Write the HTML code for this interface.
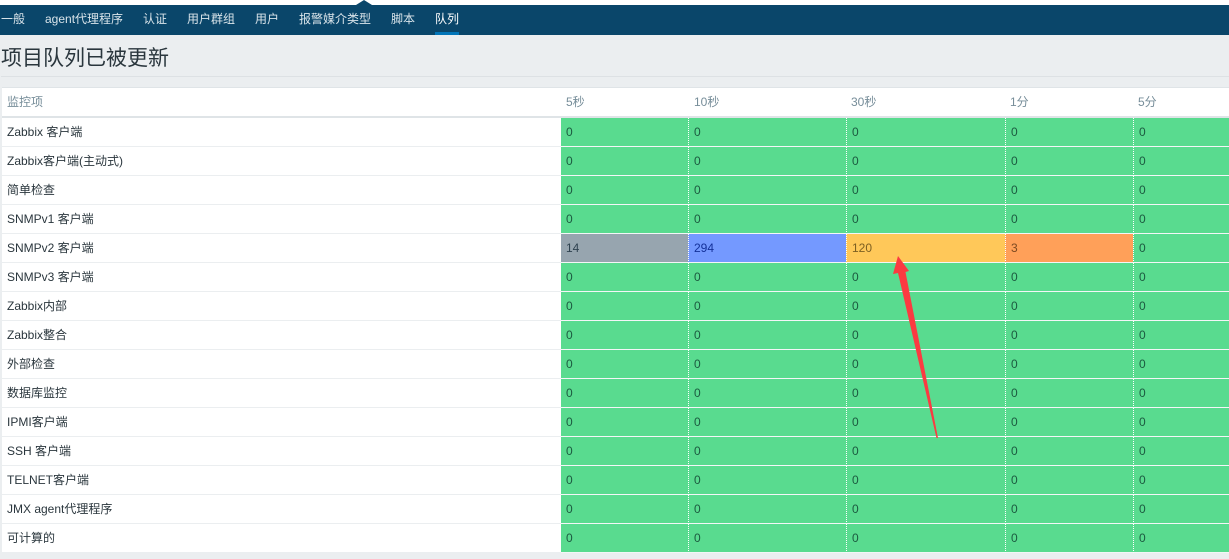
<!DOCTYPE html>
<html lang="zh-CN">
<head>
<meta charset="utf-8">
<title>队列</title>
<style>
html,body{margin:0;padding:0;}
body{width:1229px;height:559px;overflow:hidden;position:relative;background:#ebeef0;font-family:"Liberation Sans","Noto Sans CJK SC",sans-serif;font-size:12px;color:#1f2c33;}
#top{position:absolute;left:0;top:0;width:1229px;height:5px;background:#fff;}
#tri{position:absolute;left:356px;top:0;width:0;height:0;border-left:8px solid transparent;border-right:8px solid transparent;border-bottom:5px solid #0a466a;}
#nav{position:absolute;left:0;top:5px;width:1229px;height:30px;background:#0a466a;}
#nav span{position:absolute;top:0;line-height:29px;color:#d9e4ea;white-space:nowrap;}
#nav span.a{color:#fff;height:27px;border-bottom:3px solid #0275b8;}
h1{position:absolute;left:1px;top:45px;margin:0;font-size:21px;font-weight:normal;line-height:28px;white-space:nowrap;color:#2a363d;}
#rule{position:absolute;left:1px;top:76px;width:1228px;height:1px;background:#dde1e4;}
table{position:absolute;left:2px;top:87px;width:1227px;table-layout:fixed;border-collapse:separate;border-spacing:0;background:#fff;border-top:1px solid #dfe4e7;}
th,td{padding:0 0 0 5px;height:28px;line-height:28px;text-align:left;font-weight:normal;white-space:nowrap;overflow:hidden;box-sizing:content-box;}
th{color:#768d99;border-bottom:2px solid #dfe4e7;}
td{border-bottom:1px solid #ebeef0;color:#2a363d;}
td.g,td.k,td.b,td.y,td.o{border-bottom:1px solid #f4f6f7;border-left:1px dotted #fff;}
td.n{border-left:0;padding-left:5px;}
td.g{background:#59db8f;color:#1c5a40;}
td.k{background:#97a5af;color:#2f4250;}
td.b{background:#7499ff;color:#14319a;}
td.y{background:#ffc859;color:#7d5f22;}
td.o{background:#ffa059;color:#7d4a22;}
svg{position:absolute;left:0;top:0;}
</style>
</head>
<body>
<div id="top"></div>
<div id="tri"></div>
<div id="nav">
<span style="left:1px">一般</span>
<span style="left:45px">agent代理程序</span>
<span style="left:143px">认证</span>
<span style="left:187px">用户群组</span>
<span style="left:255px">用户</span>
<span style="left:299px">报警媒介类型</span>
<span style="left:391px">脚本</span>
<span class="a" style="left:435px">队列</span>
</div>
<h1>项目队列已被更新</h1>
<div id="rule"></div>
<table>
<colgroup><col style="width:559px"><col style="width:127px"><col style="width:158px"><col style="width:159px"><col style="width:128px"><col style="width:96px"></colgroup>
<tr><th>监控项</th><th>5秒</th><th style="padding-left:6px">10秒</th><th>30秒</th><th>1分</th><th>5分</th></tr>
<tr><td>Zabbix 客户端</td><td class="g n">0</td><td class="g">0</td><td class="g">0</td><td class="g">0</td><td class="g">0</td></tr>
<tr><td>Zabbix客户端(主动式)</td><td class="g n">0</td><td class="g">0</td><td class="g">0</td><td class="g">0</td><td class="g">0</td></tr>
<tr><td>简单检查</td><td class="g n">0</td><td class="g">0</td><td class="g">0</td><td class="g">0</td><td class="g">0</td></tr>
<tr><td>SNMPv1 客户端</td><td class="g n">0</td><td class="g">0</td><td class="g">0</td><td class="g">0</td><td class="g">0</td></tr>
<tr><td>SNMPv2 客户端</td><td class="k n">14</td><td class="b">294</td><td class="y">120</td><td class="o">3</td><td class="g">0</td></tr>
<tr><td>SNMPv3 客户端</td><td class="g n">0</td><td class="g">0</td><td class="g">0</td><td class="g">0</td><td class="g">0</td></tr>
<tr><td>Zabbix内部</td><td class="g n">0</td><td class="g">0</td><td class="g">0</td><td class="g">0</td><td class="g">0</td></tr>
<tr><td>Zabbix整合</td><td class="g n">0</td><td class="g">0</td><td class="g">0</td><td class="g">0</td><td class="g">0</td></tr>
<tr><td>外部检查</td><td class="g n">0</td><td class="g">0</td><td class="g">0</td><td class="g">0</td><td class="g">0</td></tr>
<tr><td>数据库监控</td><td class="g n">0</td><td class="g">0</td><td class="g">0</td><td class="g">0</td><td class="g">0</td></tr>
<tr><td>IPMI客户端</td><td class="g n">0</td><td class="g">0</td><td class="g">0</td><td class="g">0</td><td class="g">0</td></tr>
<tr><td>SSH 客户端</td><td class="g n">0</td><td class="g">0</td><td class="g">0</td><td class="g">0</td><td class="g">0</td></tr>
<tr><td>TELNET客户端</td><td class="g n">0</td><td class="g">0</td><td class="g">0</td><td class="g">0</td><td class="g">0</td></tr>
<tr><td>JMX agent代理程序</td><td class="g n">0</td><td class="g">0</td><td class="g">0</td><td class="g">0</td><td class="g">0</td></tr>
<tr><td>可计算的</td><td class="g n">0</td><td class="g">0</td><td class="g">0</td><td class="g">0</td><td class="g">0</td></tr>
</table>
<svg width="1229" height="559" viewBox="0 0 1229 559"><path d="M898 256 L909 271 L905.5 272 L938 438 L936.5 438 L898 273 L893 274 Z" fill="#fb3a41"/></svg>
</body>
</html>
